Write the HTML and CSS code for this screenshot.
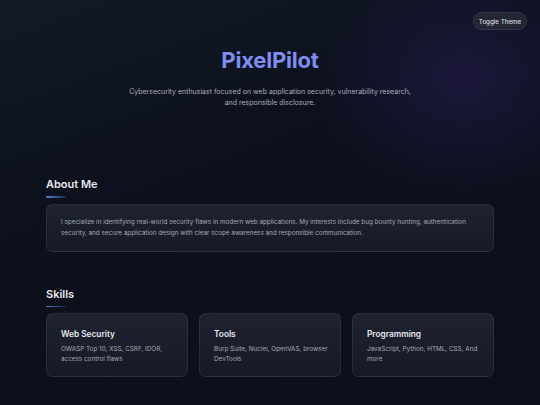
FILE: index.html
```html
<!DOCTYPE html>
<html lang="en">
<head>
<meta charset="utf-8">
<title>PixelPilot</title>
<link rel="stylesheet" href="styles.css">
</head>
<body>
<button class="toggle" type="button">Toggle Theme</button>
<main class="page">
  <header class="hero">
    <h1 class="title">PixelPilot</h1>
    <p class="tagline">Cybersecurity enthusiast focused on web application security, vulnerability research,<br>and responsible disclosure.</p>
  </header>

  <section class="section about">
    <h2 class="section-title">About Me</h2>
    <div class="card about-card">
      <p>I specialize in identifying real-world security flaws in modern web applications. My interests include bug bounty hunting, authentication security, and secure application design with clear scope awareness and responsible communication.</p>
    </div>
  </section>

  <section class="section skills">
    <h2 class="section-title">Skills</h2>
    <div class="skill-grid">
      <div class="card skill">
        <h3>Web Security</h3>
        <p>OWASP Top 10, XSS, CSRF, IDOR, access control flaws</p>
      </div>
      <div class="card skill">
        <h3>Tools</h3>
        <p>Burp Suite, Nuclei, OpenVAS, browser DevTools</p>
      </div>
      <div class="card skill">
        <h3>Programming</h3>
        <p>JavaScript, Python, HTML, CSS, And more</p>
      </div>
    </div>
  </section>
</main>
</body>
</html>
```

FILE: styles.css
```css
* { box-sizing: border-box; }
html, body { margin: 0; padding: 0; }
body {
  width: 540px;
  height: 405px;
  overflow: hidden;
  font-family: Inter, "Noto Sans", sans-serif;
  color: #e5e7eb;
  background:
    radial-gradient(ellipse 150px 120px at 465px 78px, rgba(58, 36, 120, 0.33), rgba(58, 36, 120, 0) 100%),
    linear-gradient(160deg, #131a27 0%, #0c111d 35%, #0a0f1a 100%);
  position: relative;
}
.toggle {
  position: absolute;
  top: 12px;
  right: 13px;
  height: 18px;
  width: 54px;
  padding: 0;
  border-radius: 9px;
  border: 1px solid rgba(255, 255, 255, 0.08);
  background: #242634;
  color: #dcdee5;
  font-family: Inter, sans-serif;
  font-size: 6.2px;
  font-weight: 500;
}
.page {
  width: 448px;
  margin: 0 auto;
}
.hero {
  text-align: center;
  padding-top: 47px;
}
.title {
  margin: 0;
  font-size: 22px;
  line-height: 26px;
  font-weight: 700;
  color: #7e8ef1;
  letter-spacing: -0.2px;
}
.tagline {
  margin: 13px 0 0;
  font-size: 7px;
  line-height: 11px;
  color: #aaaeb9;
}
.section-title {
  margin: 0;
  font-size: 11px;
  line-height: 14px;
  font-weight: 600;
  color: #e6e8ee;
}
.section-title::after {
  content: "";
  display: block;
  width: 20px;
  height: 1.5px;
  margin-top: 5px;
  background: linear-gradient(90deg, #5b7fd6, rgba(91, 127, 214, 0.2));
  border-radius: 1px;
}
.about { margin-top: 69px; }
.skills { margin-top: 35px; }
.card {
  margin-top: 6px;
  border: 1px solid rgba(255, 255, 255, 0.07);
  border-radius: 7px;
  background: linear-gradient(180deg, #1f2230 0%, #161a25 100%);
}
.about-card {
  padding: 12px 12px 12px 14px;
}
.about-card p {
  margin: 0;
  font-size: 6.35px;
  line-height: 11px;
  color: #a5a9b5;
}
.skill-grid {
  display: grid;
  grid-template-columns: repeat(3, 1fr);
  gap: 11px;
  margin-top: 6px;
}
.skill-grid .card { margin-top: 0; }
.skill {
  height: 64px;
  padding: 15px 10px 0 14px;
}
.skill h3 {
  margin: 0;
  font-size: 8.3px;
  line-height: 11px;
  font-weight: 600;
  color: #e6e8ee;
}
.skill p {
  margin: 4px 0 0;
  font-size: 6.35px;
  line-height: 10px;
  color: #a5a9b5;
}
```
